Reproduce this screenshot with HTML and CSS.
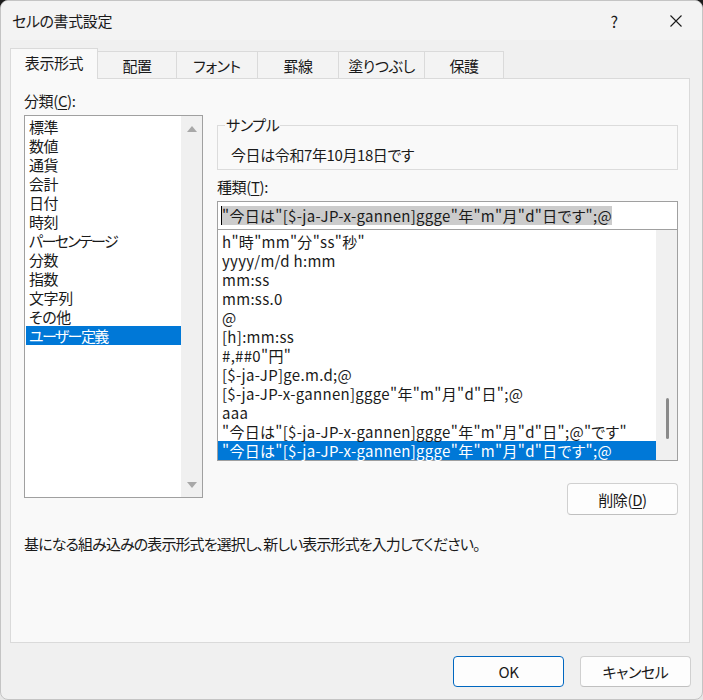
FILE: index.html
```html
<!DOCTYPE html>
<html lang="ja">
<head>
    <meta charset="UTF-8">
    <title>セルの書式設定</title>
    <link rel="stylesheet" href="styles.css">
</head>
<body>
    <div class="dialog">
        <div class="titlebar">
            <span class="title">セルの書式設定</span>
            <span class="help">?</span>
            <span class="close">
                <svg width="12" height="12" viewBox="0 0 12 12"><path d="M0.5 0.5L11.5 11.5M11.5 0.5L0.5 11.5" stroke="#1a1a1a" stroke-width="1.1" fill="none"/></svg>
            </span>
        </div>

        <!-- Tabs -->
        <div class="tabs">
            <div class="tab active" style="width: 88px">表示形式</div>
            <div class="tab" style="width: 79px">配置</div>
            <div class="tab" style="width: 81px">フォント</div>
            <div class="tab" style="width: 81px">罫線</div>
            <div class="tab" style="width: 86px">塗りつぶし</div>
            <div class="tab" style="width: 79px">保護</div>
        </div>

        <div class="panel">
            <div class="columns">
                <!-- Category list -->
                <div class="left-col">
                    <div class="label">分類(<u>C</u>):</div>
                    <div class="listbox category-list">
                        <div class="items">
                            <div class="item">標準</div>
                            <div class="item">数値</div>
                            <div class="item">通貨</div>
                            <div class="item">会計</div>
                            <div class="item">日付</div>
                            <div class="item">時刻</div>
                            <div class="item kana">パーセンテージ</div>
                            <div class="item">分数</div>
                            <div class="item">指数</div>
                            <div class="item">文字列</div>
                            <div class="item">その他</div>
                            <div class="item selected">ユーザー定義</div>
                        </div>
                        <div class="scrollbar arrows">
                            <span class="arrow up"></span>
                            <span class="arrow down"></span>
                        </div>
                    </div>
                </div>

                <!-- Sample, type field and format list -->
                <div class="right-col">
                    <fieldset class="sample">
                        <legend>サンプル</legend>
                        <div class="sample-text">今日は令和7年10月18日です</div>
                    </fieldset>

                    <div class="label type-label">種類(<u>T</u>):</div>
                    <div class="type-input">
                        <span class="caret"></span><span class="highlight">"今日は"[$-ja-JP-x-gannen]ggge"年"m"月"d"日です";@</span>
                    </div>

                    <div class="listbox format-list">
                        <div class="items">
                            <div class="item">h"時"mm"分"ss"秒"</div>
                            <div class="item">yyyy/m/d h:mm</div>
                            <div class="item">mm:ss</div>
                            <div class="item">mm:ss.0</div>
                            <div class="item">@</div>
                            <div class="item">[h]:mm:ss</div>
                            <div class="item">#,##0"円"</div>
                            <div class="item">[$-ja-JP]ge.m.d;@</div>
                            <div class="item">[$-ja-JP-x-gannen]ggge"年"m"月"d"日";@</div>
                            <div class="item">aaa</div>
                            <div class="item">"今日は"[$-ja-JP-x-gannen]ggge"年"m"月"d"日";@"です"</div>
                            <div class="item selected">"今日は"[$-ja-JP-x-gannen]ggge"年"m"月"d"日です";@</div>
                        </div>
                        <div class="scrollbar">
                            <div class="thumb"></div>
                        </div>
                    </div>

                    <div class="delete-row">
                        <button class="btn">削除(<u>D</u>)</button>
                    </div>
                </div>
            </div>

            <p class="hint">基になる組み込みの表示形式を選択し、新しい表示形式を入力してください。</p>
        </div>

        <div class="footer">
            <button class="btn primary">OK</button>
            <button class="btn">キャンセル</button>
        </div>
    </div>
</body>
</html>
```

FILE: styles.css
```css
html, body {
    height: 100%;
    margin: 0;
}

body {
    background: linear-gradient(#1c1c1c 0, #1c1c1c 50%, #e6e6e6 50%);
    font-family: "Noto Sans CJK JP", sans-serif;
    font-feature-settings: "palt";
    font-size: 15px;
    letter-spacing: -0.4px;
    color: #1a1a1a;
}

u {
    text-decoration-thickness: 1px;
    text-underline-offset: 2px;
}

.dialog {
    width: 703px;
    height: 700px;
    box-sizing: border-box;
    border: 1px solid #c4c4c4;
    border-radius: 8px;
    background-color: #f0f0f0;
    display: flex;
    flex-direction: column;
    overflow: hidden;
}

/* Title bar */
.titlebar {
    height: 39px;
    display: flex;
    align-items: center;
    padding-left: 11px;
    background-color: #f3f3f3;
}

.title {
    font-size: 15px;
    flex: 1;
}

.help {
    font-size: 16px;
    width: 20px;
    text-align: center;
    margin-right: 46px;
}

.close {
    display: flex;
    margin-right: 20px;
}

/* Tabs */
.tabs {
    display: flex;
    align-items: flex-end;
    height: 30px;
    margin-top: 8px;
    padding-left: 9px;
}

.tab {
    height: 27px;
    box-sizing: border-box;
    border: 1px solid #dadada;
    border-bottom: none;
    border-left: none;
    background-color: #f3f3f3;
    display: flex;
    align-items: center;
    justify-content: center;
}

.tab.active {
    height: 31px;
    margin-bottom: -1px;
    border-left: 1px solid #dadada;
    background-color: #f9f9f9;
    position: relative;
    z-index: 1;
    padding-bottom: 3px;
}

/* Main panel */
.panel {
    height: 565px;
    box-sizing: border-box;
    margin: 0 12px 0 9px;
    border: 1px solid #dadada;
    background-color: #f9f9f9;
    padding: 12px 11px 0 13px;
}

.columns {
    display: flex;
    gap: 14px;
}

.left-col {
    width: 179px;
}

.right-col {
    width: 461px;
}

.label {
    line-height: 20px;
    margin-bottom: 4px;
}

/* List boxes */
.listbox {
    display: flex;
    background-color: #fff;
    border: 1px solid #a0a0a0;
    box-sizing: border-box;
}

.items {
    flex: 1;
}

.item {
    height: 19px;
    line-height: 19px;
    white-space: nowrap;
}

.item.selected {
    background-color: #0078d7;
    color: #fff;
}

.scrollbar {
    width: 21px;
    background-color: #f0f0f0;
    display: flex;
    flex-direction: column;
    align-items: center;
}

.category-list {
    height: 383px;
}

.category-list .items {
    padding: 1px 0 0 1px;
}

.category-list .item {
    padding-left: 3px;
}

.category-list .kana,
.category-list .selected {
    letter-spacing: -1.6px;
}

.arrows {
    justify-content: space-between;
    padding: 10px 0 9px;
}

.arrow {
    width: 0;
    height: 0;
    border-left: 5px solid transparent;
    border-right: 5px solid transparent;
}

.arrow.up {
    border-bottom: 6px solid #a8a8a8;
}

.arrow.down {
    border-top: 6px solid #a8a8a8;
}

/* Sample group box */
.sample {
    margin: 24px 0 0;
    padding: 0 0 4px 7px;
    border: 1px solid #dcdcdc;
    min-width: 0;
}

.sample legend {
    padding: 0 1px;
    line-height: 20px;
}

.sample-text {
    line-height: 20px;
    margin: 10px 0 0 6px;
}

.type-label {
    margin-top: 7px;
}

.type-input {
    height: 28px;
    box-sizing: border-box;
    border: 1px solid #a0a0a0;
    border-bottom: none;
    background-color: #fff;
    display: flex;
    align-items: center;
    padding-left: 3px;
    letter-spacing: 0.3px;
}

.caret {
    width: 1px;
    height: 19px;
    background-color: #000;
}

.highlight {
    background-color: #cccccc;
    line-height: 19px;
    white-space: nowrap;
}

.format-list {
    height: 232px;
    letter-spacing: 0.3px;
}

.format-list .items {
    padding-top: 2px;
}

.format-list .item {
    padding-left: 4px;
}

.format-list .scrollbar {
    justify-content: flex-end;
    padding-bottom: 21px;
    box-sizing: border-box;
}

.thumb {
    width: 3px;
    height: 41px;
    border-radius: 2px;
    background-color: #8a8a8a;
    margin-left: 1px;
}

/* Buttons */
.btn {
    width: 111px;
    height: 31px;
    box-sizing: border-box;
    border: 1px solid #d0d0d0;
    border-bottom-color: #c0c0c0;
    border-radius: 4px;
    background-color: #fdfdfd;
    font-family: inherit;
    font-feature-settings: "palt";
    font-size: 15px;
    letter-spacing: -0.4px;
    color: #1a1a1a;
    padding: 0;
}

.btn.primary {
    border: 1px solid #0067c0;
}

.delete-row {
    display: flex;
    justify-content: flex-end;
    margin-top: 22px;
}

.delete-row .btn {
    height: 32px;
}

.hint {
    margin: 19px 0 0;
    line-height: 20px;
    letter-spacing: -0.9px;
}

/* Footer */
.footer {
    display: flex;
    justify-content: flex-end;
    gap: 16px;
    padding: 13px 11px 0 0;
}
```
